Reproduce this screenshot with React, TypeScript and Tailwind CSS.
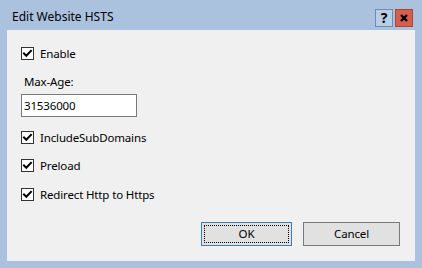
import React from "react";

function Check({ label }: { label: string }) {
  return (
    <div className="flex items-center h-[13px]">
      <div className="w-[13px] h-[13px] border border-[#333333] bg-white flex items-center justify-center shrink-0">
        <svg width="11" height="11" viewBox="0 0 11 11">
          <polyline points="2,5.5 4.3,7.8 9,2.8" fill="none" stroke="#000" strokeWidth="2" strokeLinecap="square" />
        </svg>
      </div>
      <span className="ml-[6px] leading-[13px] text-black">{label}</span>
    </div>
  );
}

export default function App() {
  return (
    <div
      className="w-[422px] h-[268px] bg-[#aac2dd] flex flex-col text-[11.5px] tracking-[-0.15px] text-black"
      style={{ fontFamily: '"Noto Sans", "Segoe UI", sans-serif' }}
    >
      <div className="h-[30px] flex items-start justify-between shrink-0">
        <div className="pl-[12px] pt-[9px] leading-[16px] text-[12px] tracking-normal">Edit Website HSTS</div>
        <div className="flex gap-[2px] pt-[9px] pr-[9px]">
          <div className="w-[18px] h-[18px] border border-[#6e8cb0] bg-[#b9cde4] flex items-center justify-center font-bold text-[14px] leading-none">
            ?
          </div>
          <div className="w-[18px] h-[18px] border border-[#a8453d] bg-[#d55e4d] flex items-center justify-center">
            <svg width="10" height="10" viewBox="0 0 10 10">
              <path d="M2 2 L8 8 M8 2 L2 8" stroke="#000" strokeWidth="2.4" />
            </svg>
          </div>
        </div>
      </div>
      <div className="flex-1 mx-[7px] mb-[7px] bg-[#f0f0f0] flex flex-col px-[14px] pt-[17px]">
        <Check label="Enable" />
        <div className="mt-[14px] ml-[3px] leading-[16px]">Max-Age:</div>
        <div className="mt-[4px] w-[116px] h-[23px] border border-[#7a7a7a] bg-white flex items-center pl-[2px] leading-none">
          31536000
        </div>
        <div className="mt-[14px]">
          <Check label="IncludeSubDomains" />
        </div>
        <div className="mt-[15px]">
          <Check label="Preload" />
        </div>
        <div className="mt-[16px]">
          <Check label="Redirect Http to Https" />
        </div>
        <div className="mt-[21px] flex justify-end gap-[11px] pr-[1px]">
          <div className="relative w-[91px] h-[24px] border border-[#3c7fb1] bg-[#e1e1e1] flex items-center justify-center">
            <div className="absolute inset-[2px] border border-dotted border-black" />
            OK
          </div>
          <div className="w-[97px] h-[24px] border border-[#7a7a7a] bg-[#e1e1e1] flex items-center justify-center">
            Cancel
          </div>
        </div>
      </div>
    </div>
  );
}
